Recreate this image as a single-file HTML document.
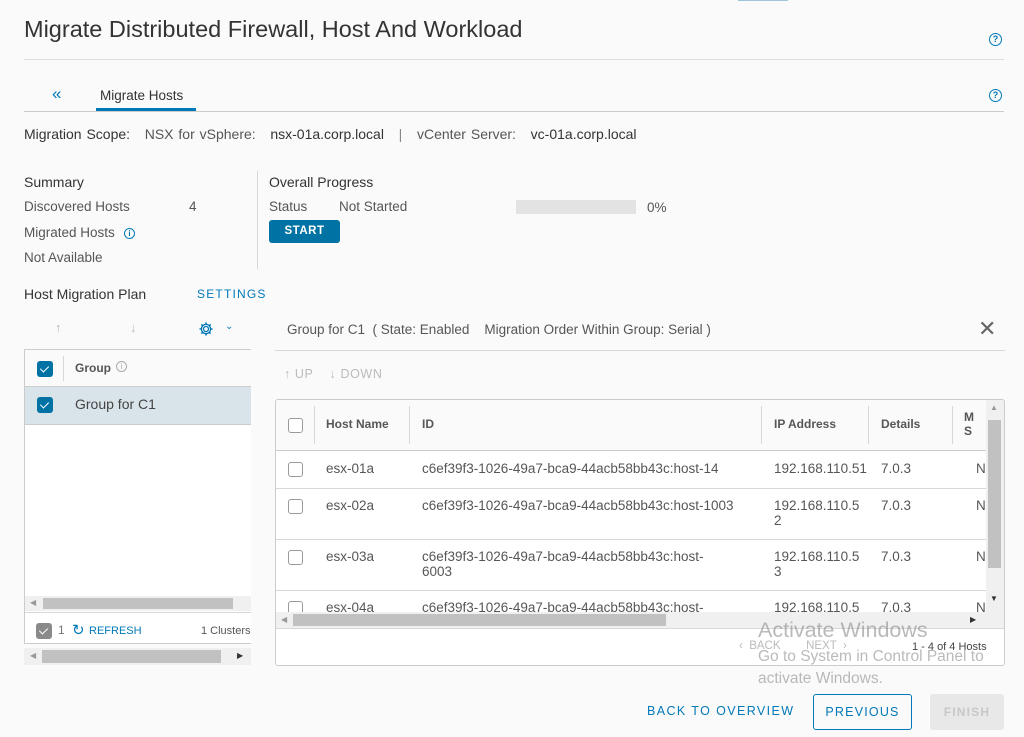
<!DOCTYPE html>
<html><head><meta charset="utf-8"><style>
*{box-sizing:border-box;margin:0;padding:0}
body{width:1024px;height:737px;background:#fafafa;font-family:"Liberation Sans",sans-serif;color:#565656;position:relative;overflow:hidden;font-size:13.5px}
.a{position:absolute;white-space:nowrap}
.cb{position:absolute;width:15px;height:15px;border:1px solid #9a9a9a;border-radius:3px;background:#fff}
.cbc{position:absolute;width:16px;height:16px;border-radius:3px;background:#0072a3}
.cbc:after{content:"";position:absolute;left:5px;top:3px;width:4px;height:7px;border:solid #fff;border-width:0 1.5px 1.5px 0;transform:rotate(45deg)}
.hl{position:absolute;height:1px;background:#d7d7d7}
.vl{position:absolute;width:1px;background:#d7d7d7}
.th{font-weight:bold;font-size:12px;color:#565656}
.help{position:absolute;width:13px;height:13px;border:1.3px solid #0079b8;border-radius:50%;color:#0079b8;font-size:9px;font-weight:bold;text-align:center;line-height:11px}
</style></head><body>
<div class="a" style="left:738px;top:0;width:50px;height:1px;background:#9ec7de"></div>
<div class="a" style="left:24px;top:16px;font-size:23.5px;color:#333">Migrate Distributed Firewall, Host And Workload</div>
<div class="help" style="left:989px;top:33px">?</div>
<div class="hl" style="left:24px;top:59px;width:980px;background:#ddd"></div>

<div class="a" style="left:52px;top:84px;font-size:17px;color:#0079b8">«</div>
<div class="a" style="left:100px;top:88px;font-size:13.5px;color:#333">Migrate Hosts</div>
<div class="a" style="left:96px;top:108px;width:100px;height:3px;background:#0079b8"></div>
<div class="hl" style="left:24px;top:111px;width:980px;background:#ccc"></div>
<div class="help" style="left:989px;top:89px">?</div>

<div class="a" style="left:24px;top:126px;font-size:14px;color:#333;word-spacing:1px"><span>Migration Scope:</span>&nbsp;&nbsp; <span style="color:#565656">NSX for vSphere:</span>&nbsp;&nbsp; <span>nsx-01a.corp.local</span> &nbsp;&nbsp;<span style="color:#888">|</span>&nbsp;&nbsp; <span style="color:#565656">vCenter Server:</span>&nbsp;&nbsp; <span>vc-01a.corp.local</span></div>

<div class="a" style="left:24px;top:174px;font-size:14px;color:#333">Summary</div>
<div class="a" style="left:24px;top:199px;font-size:13.5px">Discovered Hosts</div>
<div class="a" style="left:189px;top:199px;font-size:13.5px">4</div>
<div class="a" style="left:24px;top:225px;font-size:13.5px">Migrated Hosts</div>
<div class="help" style="left:124px;top:228px;width:11px;height:11px;font-size:8px;line-height:9px">i</div>
<div class="a" style="left:24px;top:250px;font-size:13.5px">Not Available</div>
<div class="vl" style="left:257px;top:171px;height:98px"></div>
<div class="a" style="left:269px;top:174px;font-size:14px;color:#333">Overall Progress</div>
<div class="a" style="left:269px;top:199px;font-size:13.5px">Status</div>
<div class="a" style="left:339px;top:199px;font-size:13.5px">Not Started</div>
<div class="a" style="left:516px;top:200px;width:120px;height:14px;background:#e3e3e3"></div>
<div class="a" style="left:647px;top:200px;font-size:13.5px">0%</div>
<div class="a" style="left:269px;top:220px;width:71px;height:23px;background:#0072a3;border-radius:3px;color:#fff;font-weight:bold;font-size:11.5px;text-align:center;line-height:23px;letter-spacing:.5px">START</div>

<div class="a" style="left:24px;top:286px;font-size:14px;color:#333">Host Migration Plan</div>
<div class="a" style="left:197px;top:287px;font-size:12px;color:#0079b8;letter-spacing:1.2px">SETTINGS</div>

<div class="a" style="left:55px;top:320px;color:#bbb;font-size:13px">↑</div>
<div class="a" style="left:130px;top:320px;color:#bbb;font-size:13px">↓</div>
<svg class="a" style="left:198px;top:321px" width="16" height="16" viewBox="0 0 16 16"><circle cx="8" cy="8" r="2.5" fill="none" stroke="#0079b8" stroke-width="1.3"/><path d="M8 1.5v2M8 12.5v2M1.5 8h2M12.5 8h2M3.4 3.4l1.4 1.4M11.2 11.2l1.4 1.4M3.4 12.6l1.4-1.4M11.2 4.8l1.4-1.4" stroke="#0079b8" stroke-width="1.6"/><circle cx="8" cy="8" r="4.6" fill="none" stroke="#0079b8" stroke-width="1.3"/></svg>
<div class="a" style="left:225px;top:321px;color:#0079b8;font-size:10px">⌄</div>

<!-- left panel -->
<div class="a" style="left:24px;top:349px;width:227px;height:295px;border:1px solid #ccc;border-right:none;background:#fff"></div>
<div class="a" style="left:25px;top:350px;width:226px;height:36px;background:#fafafa"></div>
<div class="cbc" style="left:37px;top:361px"></div>
<div class="vl" style="left:63px;top:356px;height:25px"></div>
<div class="a th" style="left:75px;top:361px">Group</div>
<div class="a" style="left:116px;top:361px;width:11px;height:11px;border:1px solid #aaa;border-radius:50%;font-size:8px;color:#aaa;text-align:center;line-height:9px">i</div>
<div class="a" style="left:25px;top:386px;width:226px;height:39px;background:#d9e4ea;border-top:1px solid #ccc;border-bottom:1px solid #ccc"></div>
<div class="cbc" style="left:37px;top:397px"></div>
<div class="a" style="left:75px;top:396px;font-size:14px;color:#444">Group for C1</div>
<div class="a" style="left:25px;top:596px;width:226px;height:15px;background:#f0f0f0"></div>
<div class="a" style="left:43px;top:598px;width:190px;height:11px;background:#c1c1c1"></div>
<div class="a" style="left:30px;top:598px;font-size:8px;color:#999">◀</div>
<div class="hl" style="left:25px;top:612px;width:226px"></div>
<div class="a" style="left:36px;top:623px;width:16px;height:16px;border-radius:3px;background:#8a8a8a"></div>
<div class="a" style="left:41px;top:626px;width:5px;height:8px;border:solid #fff;border-width:0 1.5px 1.5px 0;transform:rotate(45deg)"></div>
<div class="a" style="left:58px;top:623px;font-size:12px;color:#777">1</div>
<div class="a" style="left:72px;top:621px;font-size:15px;color:#0079b8">↻</div>
<div class="a" style="left:89px;top:625px;font-size:11px;color:#0079b8">REFRESH</div>
<div class="a" style="left:201px;top:625px;font-size:11px;color:#555">1 Clusters</div>
<div class="a" style="left:24px;top:648px;width:227px;height:17px;background:#f0f0f0"></div>
<div class="a" style="left:42px;top:650px;width:179px;height:13px;background:#c1c1c1"></div>
<div class="a" style="left:30px;top:651px;font-size:8px;color:#999">◀</div>
<div class="a" style="left:237px;top:651px;font-size:8px;color:#333">▶</div>

<!-- right panel -->
<div class="a" style="left:287px;top:322px;font-size:13.5px">Group for C1 &nbsp;( State: Enabled &nbsp;&nbsp; Migration Order Within Group: Serial )</div>
<div class="a" style="left:978px;top:316px;font-size:22px;color:#666;font-weight:300">✕</div>
<div class="hl" style="left:275px;top:350px;width:730px"></div>
<div class="a" style="left:284px;top:367px;font-size:12.5px;color:#bbb;letter-spacing:.6px">↑ UP &nbsp;&nbsp; ↓ DOWN</div>

<div class="a" style="left:275px;top:399px;width:730px;height:267px;border:1px solid #ccc;border-radius:3px;background:#fff;overflow:hidden;font-size:13.5px">
 <div class="a" style="left:0;top:0;width:728px;height:51px;background:#fafafa;border-bottom:1px solid #ccc"></div>
 <div class="cb" style="left:12px;top:18px"></div>
 <div class="vl" style="left:38px;top:6px;height:38px"></div>
 <div class="a th" style="left:50px;top:17px">Host Name</div>
 <div class="vl" style="left:133px;top:6px;height:38px"></div>
 <div class="a th" style="left:146px;top:17px">ID</div>
 <div class="vl" style="left:485px;top:6px;height:38px"></div>
 <div class="a th" style="left:498px;top:17px">IP Address</div>
 <div class="vl" style="left:592px;top:6px;height:38px"></div>
 <div class="a th" style="left:605px;top:17px">Details</div>
 <div class="vl" style="left:676px;top:6px;height:38px"></div>
 <div class="a th" style="left:688px;top:10px;line-height:14px">M<br>S</div>

 <div class="cb" style="left:12px;top:62px"></div>
 <div class="a" style="left:50px;top:61px">esx-01a</div>
 <div class="a" style="left:146px;top:61px">c6ef39f3-1026-49a7-bca9-44acb58bb43c:host-14</div>
 <div class="a" style="left:498px;top:61px">192.168.110.51</div>
 <div class="a" style="left:605px;top:61px">7.0.3</div>
 <div class="a" style="left:700px;top:61px">N</div>
 <div class="hl" style="left:0;top:88px;width:728px"></div>

 <div class="cb" style="left:12px;top:99px"></div>
 <div class="a" style="left:50px;top:98px">esx-02a</div>
 <div class="a" style="left:146px;top:98px">c6ef39f3-1026-49a7-bca9-44acb58bb43c:host-1003</div>
 <div class="a" style="left:498px;top:98px;line-height:15px">192.168.110.5<br>2</div>
 <div class="a" style="left:605px;top:98px">7.0.3</div>
 <div class="a" style="left:700px;top:98px">N</div>
 <div class="hl" style="left:0;top:139px;width:728px"></div>

 <div class="cb" style="left:12px;top:150px"></div>
 <div class="a" style="left:50px;top:149px">esx-03a</div>
 <div class="a" style="left:146px;top:149px;line-height:15px">c6ef39f3-1026-49a7-bca9-44acb58bb43c:host-<br>6003</div>
 <div class="a" style="left:498px;top:149px;line-height:15px">192.168.110.5<br>3</div>
 <div class="a" style="left:605px;top:149px">7.0.3</div>
 <div class="a" style="left:700px;top:149px">N</div>
 <div class="hl" style="left:0;top:190px;width:728px"></div>

 <div class="cb" style="left:12px;top:201px"></div>
 <div class="a" style="left:50px;top:200px">esx-04a</div>
 <div class="a" style="left:146px;top:200px">c6ef39f3-1026-49a7-bca9-44acb58bb43c:host-</div>
 <div class="a" style="left:498px;top:200px">192.168.110.5</div>
 <div class="a" style="left:605px;top:200px">7.0.3</div>
 <div class="a" style="left:700px;top:200px">N</div>

 <div class="a" style="left:0;top:212px;width:728px;height:16px;background:#f0f0f0"></div>
 <div class="a" style="left:17px;top:214px;width:373px;height:12px;background:#c1c1c1"></div>
 <div class="a" style="left:5px;top:215px;font-size:8px;color:#999">◀</div>
 <div class="a" style="left:694px;top:215px;font-size:8px;color:#333">▶</div>
 <div class="a" style="left:710px;top:0;width:18px;height:212px;background:#f0f0f0"></div>
 <div class="a" style="left:712px;top:20px;width:13px;height:148px;background:#c1c1c1"></div>
 <div class="a" style="left:714px;top:3px;font-size:8px;color:#999">▲</div>
 <div class="a" style="left:714px;top:194px;font-size:8px;color:#333">▼</div>
 <div class="hl" style="left:0;top:228px;width:728px"></div>
 <div class="a" style="left:463px;top:240px;font-size:11.5px;color:#bbb">‹ &nbsp;BACK &nbsp;&nbsp;&nbsp;&nbsp;&nbsp;&nbsp; NEXT &nbsp;›</div>
 <div class="a" style="left:636px;top:241px;font-size:11px;color:#444">1 - 4 of 4 Hosts</div>
</div>

<div class="a" style="left:758px;top:618px;font-size:21.5px;color:rgba(130,130,130,.55)">Activate Windows</div>
<div class="a" style="left:758px;top:646px;font-size:15.5px;color:rgba(130,130,130,.55);line-height:22px">Go to System in Control Panel to<br>activate Windows.</div>

<div class="a" style="left:647px;top:704px;font-size:12.5px;color:#0079b8;letter-spacing:1.4px">BACK TO OVERVIEW</div>
<div class="a" style="left:813px;top:694px;width:99px;height:36px;border:1px solid #0079b8;border-radius:3px;text-align:center;line-height:34px;font-size:12.5px;color:#0079b8;letter-spacing:1.2px">PREVIOUS</div>
<div class="a" style="left:930px;top:694px;width:74px;height:36px;background:#e8e8e8;border-radius:3px;text-align:center;line-height:36px;font-size:12px;color:#c8c8c8;letter-spacing:1.2px;font-weight:bold">FINISH</div>
</body></html>
